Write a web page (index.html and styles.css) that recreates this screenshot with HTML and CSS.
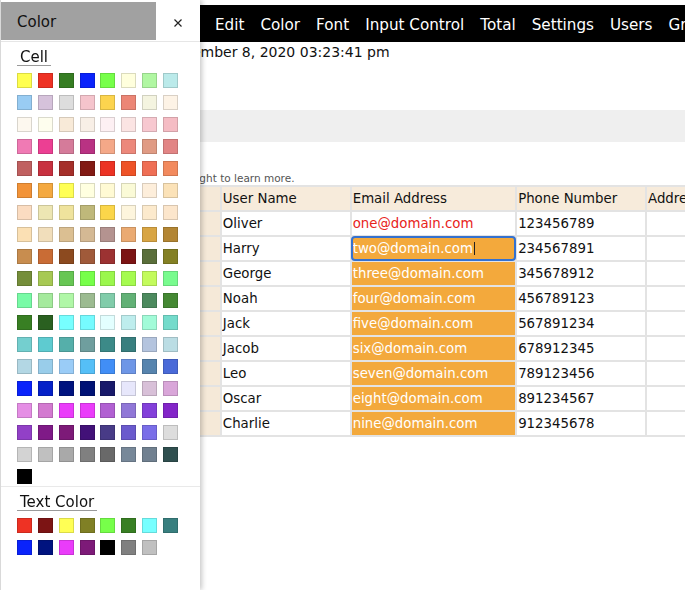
FILE: index.html
```html
<!DOCTYPE html>
<html lang="en">
<head>
<meta charset="utf-8">
<title>Grid – Color</title>
<link rel="stylesheet" href="styles.css">
</head>
<body>
<div class="page">
  <nav class="menubar">
    <span class="menu-item">Edit</span>
    <span class="menu-item">Color</span>
    <span class="menu-item">Font</span>
    <span class="menu-item">Input Control</span>
    <span class="menu-item">Total</span>
    <span class="menu-item">Settings</span>
    <span class="menu-item">Users</span>
    <span class="menu-item">Groups</span>
  </nav>
  <div class="date">September 8, 2020 03:23:41 pm</div>
  <div class="toolbar"></div>
  <p class="hint">Scroll right to learn more.</p>
  <table class="grid">
    <colgroup>
      <col class="c-row"><col class="c-user"><col class="c-email"><col class="c-phone"><col class="c-addr">
    </colgroup>
    <thead>
      <tr><th class="rowhead"></th><th>User Name</th><th>Email Address</th><th>Phone Number</th><th>Address</th></tr>
    </thead>
    <tbody>
      <tr><td class="rowhead"></td><td>Oliver</td><td class="red">one@domain.com</td><td>123456789</td><td></td></tr>
      <tr><td class="rowhead"></td><td>Harry</td><td class="sel edit">two@domain.com<span class="caret"></span></td><td>234567891</td><td></td></tr>
      <tr><td class="rowhead"></td><td>George</td><td class="sel">three@domain.com</td><td>345678912</td><td></td></tr>
      <tr><td class="rowhead"></td><td>Noah</td><td class="sel">four@domain.com</td><td>456789123</td><td></td></tr>
      <tr><td class="rowhead"></td><td>Jack</td><td class="sel">five@domain.com</td><td>567891234</td><td></td></tr>
      <tr><td class="rowhead"></td><td>Jacob</td><td class="sel">six@domain.com</td><td>678912345</td><td></td></tr>
      <tr><td class="rowhead"></td><td>Leo</td><td class="sel">seven@domain.com</td><td>789123456</td><td></td></tr>
      <tr><td class="rowhead"></td><td>Oscar</td><td class="sel">eight@domain.com</td><td>891234567</td><td></td></tr>
      <tr><td class="rowhead"></td><td>Charlie</td><td class="sel">nine@domain.com</td><td>912345678</td><td></td></tr>
    </tbody>
  </table>
</div>

<aside class="panel">
  <div class="panel-head">
    <div class="panel-title">Color</div>
    <div class="panel-close">
      <svg width="8" height="8" viewBox="0 0 8 8"><path d="M0.5 0.5L7.5 7.5M7.5 0.5L0.5 7.5" stroke="#222" stroke-width="1.2" fill="none"/></svg>
    </div>
  </div>

  <section class="section">
    <div class="label">Cell</div>
    <div class="swatches">
      <span class="sw" style="background:#ffff4f"></span><span class="sw" style="background:#ee3224"></span><span class="sw" style="background:#367d23"></span><span class="sw" style="background:#0a23fb"></span><span class="sw" style="background:#77ff4a"></span><span class="sw" style="background:#ffffdd"></span><span class="sw" style="background:#b0f7a2"></span><span class="sw" style="background:#bbeaea"></span>
      <span class="sw" style="background:#99ccf3"></span><span class="sw" style="background:#d6c2db"></span><span class="sw" style="background:#dddddd"></span><span class="sw" style="background:#f5c4cc"></span><span class="sw" style="background:#fcd44e"></span><span class="sw" style="background:#ec8676"></span><span class="sw" style="background:#f4f4e0"></span><span class="sw" style="background:#fdf3e6"></span>
      <span class="sw" style="background:#fdf8ef"></span><span class="sw" style="background:#fefeee"></span><span class="sw" style="background:#f8ead8"></span><span class="sw" style="background:#f8efe6"></span><span class="sw" style="background:#fdf0f3"></span><span class="sw" style="background:#fbe4e3"></span><span class="sw" style="background:#f7c8d0"></span><span class="sw" style="background:#f5bcc4"></span>
      <span class="sw" style="background:#f07ab4"></span><span class="sw" style="background:#ec3f93"></span><span class="sw" style="background:#d57b9a"></span><span class="sw" style="background:#b93283"></span><span class="sw" style="background:#f4a888"></span><span class="sw" style="background:#ec887b"></span><span class="sw" style="background:#e09b84"></span><span class="sw" style="background:#e28585"></span>
      <span class="sw" style="background:#c06060"></span><span class="sw" style="background:#c83140"></span><span class="sw" style="background:#a52f2a"></span><span class="sw" style="background:#821a14"></span><span class="sw" style="background:#ec3324"></span><span class="sw" style="background:#ee5327"></span><span class="sw" style="background:#ef6f55"></span><span class="sw" style="background:#f28a5e"></span>
      <span class="sw" style="background:#f29338"></span><span class="sw" style="background:#f4a940"></span><span class="sw" style="background:#ffff55"></span><span class="sw" style="background:#ffffe0"></span><span class="sw" style="background:#fffad4"></span><span class="sw" style="background:#fafad7"></span><span class="sw" style="background:#fdeedb"></span><span class="sw" style="background:#fbe2b8"></span>
      <span class="sw" style="background:#fbdcc1"></span><span class="sw" style="background:#ede6b3"></span><span class="sw" style="background:#efe39d"></span><span class="sw" style="background:#bfb87a"></span><span class="sw" style="background:#fbd64a"></span><span class="sw" style="background:#fdf5dd"></span><span class="sw" style="background:#fceacd"></span><span class="sw" style="background:#fce6cc"></span>
      <span class="sw" style="background:#fbe0b4"></span><span class="sw" style="background:#f1debb"></span><span class="sw" style="background:#dbbf92"></span><span class="sw" style="background:#d4b994"></span><span class="sw" style="background:#b49390"></span><span class="sw" style="background:#eaaa72"></span><span class="sw" style="background:#d8a544"></span><span class="sw" style="background:#b38634"></span>
      <span class="sw" style="background:#c88d4f"></span><span class="sw" style="background:#c96c35"></span><span class="sw" style="background:#8c4a1f"></span><span class="sw" style="background:#a05a3a"></span><span class="sw" style="background:#9c3232"></span><span class="sw" style="background:#7c1414"></span><span class="sw" style="background:#5a6e3a"></span><span class="sw" style="background:#848024"></span>
      <span class="sw" style="background:#758e3a"></span><span class="sw" style="background:#a7c954"></span><span class="sw" style="background:#67c654"></span><span class="sw" style="background:#77ff4a"></span><span class="sw" style="background:#9bf74d"></span><span class="sw" style="background:#a5fb4f"></span><span class="sw" style="background:#c3fb5c"></span><span class="sw" style="background:#78fb8e"></span>
      <span class="sw" style="background:#78fba6"></span><span class="sw" style="background:#a5ea9d"></span><span class="sw" style="background:#b0f7a7"></span><span class="sw" style="background:#9cbb91"></span><span class="sw" style="background:#81ccaa"></span><span class="sw" style="background:#62b176"></span><span class="sw" style="background:#4c8a5e"></span><span class="sw" style="background:#448833"></span>
      <span class="sw" style="background:#387f23"></span><span class="sw" style="background:#2a6020"></span><span class="sw" style="background:#77ffff"></span><span class="sw" style="background:#76fbff"></span><span class="sw" style="background:#e3ffff"></span><span class="sw" style="background:#beeded"></span><span class="sw" style="background:#a2fbd8"></span><span class="sw" style="background:#74dbcb"></span>
      <span class="sw" style="background:#74cfcf"></span><span class="sw" style="background:#5ecbd0"></span><span class="sw" style="background:#55afaa"></span><span class="sw" style="background:#6f9e9e"></span><span class="sw" style="background:#3c8a88"></span><span class="sw" style="background:#387f7f"></span><span class="sw" style="background:#b4c4de"></span><span class="sw" style="background:#bbdde4"></span>
      <span class="sw" style="background:#b3d7e4"></span><span class="sw" style="background:#99cdea"></span><span class="sw" style="background:#9accf7"></span><span class="sw" style="background:#55bff7"></span><span class="sw" style="background:#418ef6"></span><span class="sw" style="background:#6e96e6"></span><span class="sw" style="background:#5784ae"></span><span class="sw" style="background:#4a6ad8"></span>
      <span class="sw" style="background:#0a23fb"></span><span class="sw" style="background:#0521c8"></span><span class="sw" style="background:#00137f"></span><span class="sw" style="background:#001275"></span><span class="sw" style="background:#18196a"></span><span class="sw" style="background:#e7e7fb"></span><span class="sw" style="background:#d8c0d8"></span><span class="sw" style="background:#d9a6d9"></span>
      <span class="sw" style="background:#e58ee5"></span><span class="sw" style="background:#d37ad0"></span><span class="sw" style="background:#ea3cfa"></span><span class="sw" style="background:#ea3cfa"></span><span class="sw" style="background:#b160d2"></span><span class="sw" style="background:#9077d7"></span><span class="sw" style="background:#8340da"></span><span class="sw" style="background:#8325c8"></span>
      <span class="sw" style="background:#9240c7"></span><span class="sw" style="background:#7f1a87"></span><span class="sw" style="background:#7d1a78"></span><span class="sw" style="background:#421178"></span><span class="sw" style="background:#483b87"></span><span class="sw" style="background:#6a5acd"></span><span class="sw" style="background:#7a6ee8"></span><span class="sw" style="background:#dddddd"></span>
      <span class="sw" style="background:#d3d3d3"></span><span class="sw" style="background:#c0c0c0"></span><span class="sw" style="background:#a9a9a9"></span><span class="sw" style="background:#808080"></span><span class="sw" style="background:#696969"></span><span class="sw" style="background:#778899"></span><span class="sw" style="background:#708090"></span><span class="sw" style="background:#2f4f4f"></span>
      <span class="sw" style="background:#000000"></span>
    </div>
  </section>

  <section class="section">
    <div class="label">Text Color</div>
    <div class="swatches">
      <span class="sw" style="background:#ee3224"></span><span class="sw" style="background:#7c1414"></span><span class="sw" style="background:#ffff55"></span><span class="sw" style="background:#808025"></span><span class="sw" style="background:#77ff4a"></span><span class="sw" style="background:#387f23"></span><span class="sw" style="background:#77ffff"></span><span class="sw" style="background:#387f7f"></span>
      <span class="sw" style="background:#0a23fb"></span><span class="sw" style="background:#00137f"></span><span class="sw" style="background:#ea3cfa"></span><span class="sw" style="background:#7d1a78"></span><span class="sw" style="background:#000000"></span><span class="sw" style="background:#808080"></span><span class="sw" style="background:#c0c0c0"></span>
    </div>
  </section>
</aside>
</body>
</html>
```

FILE: styles.css
```css
html, body {
  margin: 0;
  height: 100%;
  overflow: hidden;
}

body {
  font-family: "DejaVu Sans", Verdana, sans-serif;
  color: #111;
  background: #fff;
}

.page {
  width: 1100px;
}

/* top menu */
.menubar {
  margin-top: 5px;
  height: 37px;
  box-sizing: border-box;
  padding: 3px 0 0 207px;
  background: #000;
  display: flex;
  font-size: 15.2px;
  line-height: 34px;
  color: #fff;
}

.menu-item {
  padding: 0 8px;
  white-space: nowrap;
}

.date {
  margin-top: 2px;
  padding-left: 160px;
  font-size: 14px;
  line-height: 16px;
  height: 16px;
  white-space: nowrap;
}

.toolbar {
  margin: 50px 0 0 160px;
  height: 32px;
  background: #efefef;
}

.hint {
  margin: 30px 0 0 160px;
  font-size: 10.5px;
  line-height: 13px;
  color: #555;
}

/* grid */
.grid {
  margin-left: 160px;
  table-layout: fixed;
  width: 690px;
  border-spacing: 2px;
  background: #e3e3e3;
  font-size: 10pt;
}

.c-row { width: 57px; }
.c-user { width: 126px; }
.c-email { width: 161px; }
.c-phone { width: 126px; }
.c-addr { width: 198px; }

.grid th,
.grid td {
  height: 23px;
  padding: 0 1px;
  line-height: 23px;
  text-align: left;
  font-weight: normal;
  white-space: nowrap;
  overflow: hidden;
  background: #fff;
  color: #111;
}

.grid th {
  background: #f7ebdb;
}

.grid .rowhead {
  background: #f5e9d8;
}

.grid td.red {
  color: #e8231b;
}

.grid td.sel {
  background: #f3a93c;
  color: #fff;
}

.grid td.edit {
  outline: 2px solid #3471cf;
  outline-offset: -1px;
  border-radius: 3px;
  overflow: visible;
}

.caret {
  display: inline-block;
  width: 1px;
  height: 13px;
  margin-left: 1px;
  background: #222;
  vertical-align: -2px;
}

/* color panel */
.panel {
  position: fixed;
  left: 0;
  top: 0;
  width: 200px;
  height: 100%;
  box-sizing: border-box;
  background: #fff;
  border-left: 1px solid #d9d9d9;
  box-shadow: 2px 0 5px rgba(0, 0, 0, 0.22);
}

.panel-head {
  padding-top: 2px;
  height: 39px;
  border-bottom: 1px solid #e6e6e6;
  display: flex;
}

.panel-title {
  width: 155px;
  height: 38px;
  box-sizing: border-box;
  padding: 3px 0 0 16px;
  font-size: 15px;
  line-height: 35px;
  background: #a1a1a1;
  color: #111;
}

.panel-close {
  flex: 1;
  display: flex;
  align-items: center;
  justify-content: center;
  padding-top: 2px;
}

.panel-close svg {
  display: block;
}

.section {
  padding: 7px 0 2px 16px;
  font-size: 15px;
  line-height: 16px;
}

.section + .section {
  border-top: 1px solid #e9e9e9;
}

.label {
  display: block;
  width: fit-content;
  padding: 0 3px;
  border-bottom: 1px solid #9a9a9a;
  color: #111;
}

.swatches {
  display: grid;
  grid-template-columns: repeat(8, 15px);
  column-gap: 5.86px;
  row-gap: 7px;
  margin-top: 7px;
}

.sw {
  display: block;
  height: 15px;
  box-shadow: inset 0 0 0 1px rgba(0, 0, 0, 0.14);
}
```
